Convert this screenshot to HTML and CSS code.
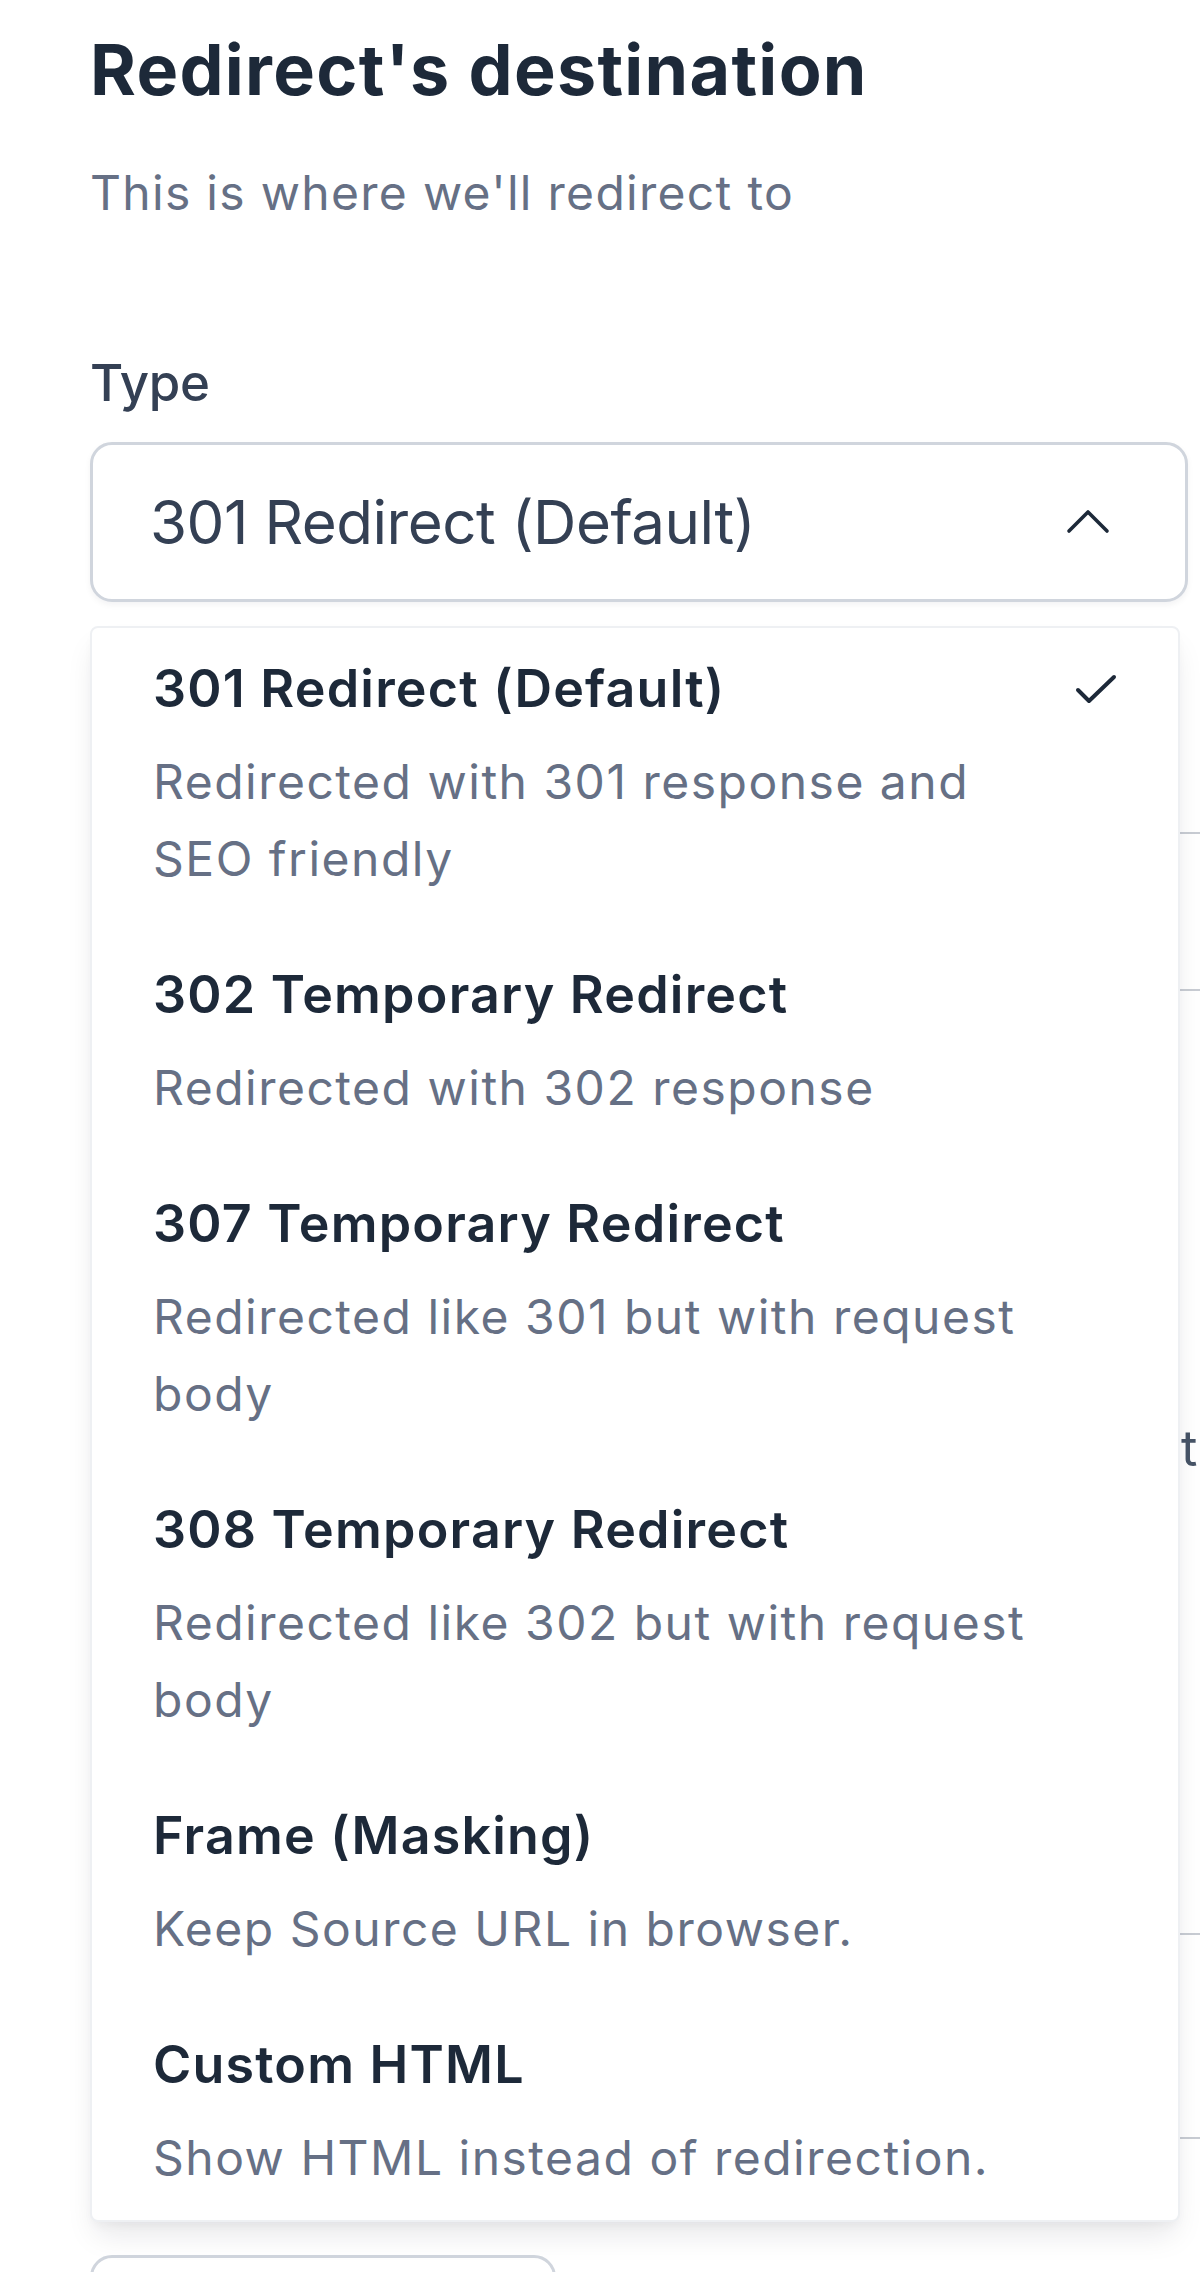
FILE: index.html
```html
<!DOCTYPE html>
<html lang="en">
<head>
<meta charset="utf-8">
<title>Redirect's destination</title>
<link rel="stylesheet" href="styles.css">
</head>
<body>
<main class="page">
  <h2 class="title">Redirect's destination</h2>
  <p class="subtitle">This is where we'll redirect to</p>

  <label class="label">Type</label>
  <div class="select-wrap">
    <div class="select">
      <span class="select-value">301 Redirect (Default)</span>
      <svg class="chevron" width="48" height="28" viewBox="0 0 48 28" aria-hidden="true">
        <path d="M5 24 L24 5 L43 24" fill="none" stroke="#1d2939" stroke-width="3.6" stroke-linecap="round" stroke-linejoin="round"/>
      </svg>
    </div>

    <ul class="menu">
      <li class="option">
        <div class="option-head">
          <span class="option-title">301 Redirect (Default)</span>
          <svg class="check" width="44" height="32" viewBox="0 0 44 32" aria-hidden="true">
            <path d="M4 17 L15 28 L40 4" fill="none" stroke="#1d2939" stroke-width="4" stroke-linecap="round" stroke-linejoin="round"/>
          </svg>
        </div>
        <p class="option-desc">Redirected with 301 response and<br>SEO friendly</p>
      </li>
      <li class="option">
        <div class="option-head"><span class="option-title">302 Temporary Redirect</span></div>
        <p class="option-desc">Redirected with 302 response</p>
      </li>
      <li class="option">
        <div class="option-head"><span class="option-title">307 Temporary Redirect</span></div>
        <p class="option-desc">Redirected like 301 but with request<br>body</p>
      </li>
      <li class="option">
        <div class="option-head"><span class="option-title">308 Temporary Redirect</span></div>
        <p class="option-desc">Redirected like 302 but with request<br>body</p>
      </li>
      <li class="option">
        <div class="option-head"><span class="option-title">Frame (Masking)</span></div>
        <p class="option-desc">Keep Source URL in browser.</p>
      </li>
      <li class="option">
        <div class="option-head"><span class="option-title">Custom HTML</span></div>
        <p class="option-desc">Show HTML instead of redirection.</p>
      </li>
    </ul>
  </div>

  <div class="behind">
    <div class="field-box field-one"></div>
    <p class="hint">th</p>
    <div class="field-box field-two"></div>
    <div class="ghost-button"></div>
  </div>
</main>
</body>
</html>
```

FILE: styles.css
```css
* {
  box-sizing: border-box;
}

html, body {
  margin: 0;
  padding: 0;
  background: #ffffff;
  overflow: hidden;
}

body {
  font-family: Inter, "Noto Sans", "Liberation Sans", sans-serif;
  color: #1d2939;
}

.page {
  padding: 29px 0 0 90px;
  width: 1188px;
}

.title {
  margin: 0;
  font-size: 70px;
  line-height: 82px;
  font-weight: 700;
  color: #1d2939;
  letter-spacing: 1.3px;
}

.subtitle {
  margin: 47px 0 0;
  font-size: 48px;
  line-height: 70px;
  font-weight: 400;
  color: #667085;
  letter-spacing: 1.3px;
}

.label {
  display: block;
  margin-top: 119px;
  font-size: 51px;
  line-height: 71px;
  font-weight: 500;
  color: #344054;
  letter-spacing: -0.3px;
}

.select-wrap {
  position: relative;
  margin-top: 24px;
  width: 1098px;
}

.select {
  display: flex;
  align-items: center;
  justify-content: space-between;
  height: 160px;
  padding: 0 73px 0 57px;
  border: 3px solid #d0d5dd;
  border-radius: 22px;
  background: #ffffff;
  box-shadow: 0 3px 6px rgba(16, 24, 40, 0.05);
}

.select-value {
  font-size: 60px;
  line-height: 90px;
  color: #344054;
  letter-spacing: -0.45px;
}

.chevron {
  display: block;
  margin-top: -3px;
}

.menu {
  position: absolute;
  top: calc(100% + 24px);
  left: 0;
  width: 1090px;
  height: 1596px;
  margin: 0;
  padding: 0;
  list-style: none;
  overflow: hidden;
  background: #ffffff;
  border: 2px solid #eef0f3;
  border-radius: 8px;
  box-shadow: 0 18px 30px -6px rgba(16, 24, 40, 0.10), 0 6px 12px -4px rgba(16, 24, 40, 0.05);
  z-index: 2;
}

.option {
  padding: 29px 60px 37px 61px;
}

.option-head {
  display: flex;
  align-items: center;
  justify-content: space-between;
}

.option-title {
  font-size: 52px;
  line-height: 64px;
  font-weight: 600;
  color: #1d2939;
  letter-spacing: 1.2px;
}

.check {
  display: block;
}

.option-desc {
  margin: 22px 0 0;
  font-size: 48px;
  line-height: 77px;
  color: #667085;
  letter-spacing: 1.5px;
}

.behind {
  position: relative;
  z-index: 1;
}

.field-box {
  width: 1140px;
  border: 2px solid #c8ccd3;
  border-radius: 20px;
  background: #ffffff;
}

.field-one {
  margin-top: 230px;
  height: 159px;
}

.hint {
  margin: 427px 0 0;
  padding-left: 1091px;
  font-size: 50px;
  line-height: 60px;
  color: #475467;
  white-space: nowrap;
}

.field-two {
  margin-top: 455px;
  height: 206px;
}

.ghost-button {
  margin-top: 116px;
  width: 466px;
  height: 110px;
  border: 3px solid #d0d5dd;
  border-radius: 22px;
}
```
